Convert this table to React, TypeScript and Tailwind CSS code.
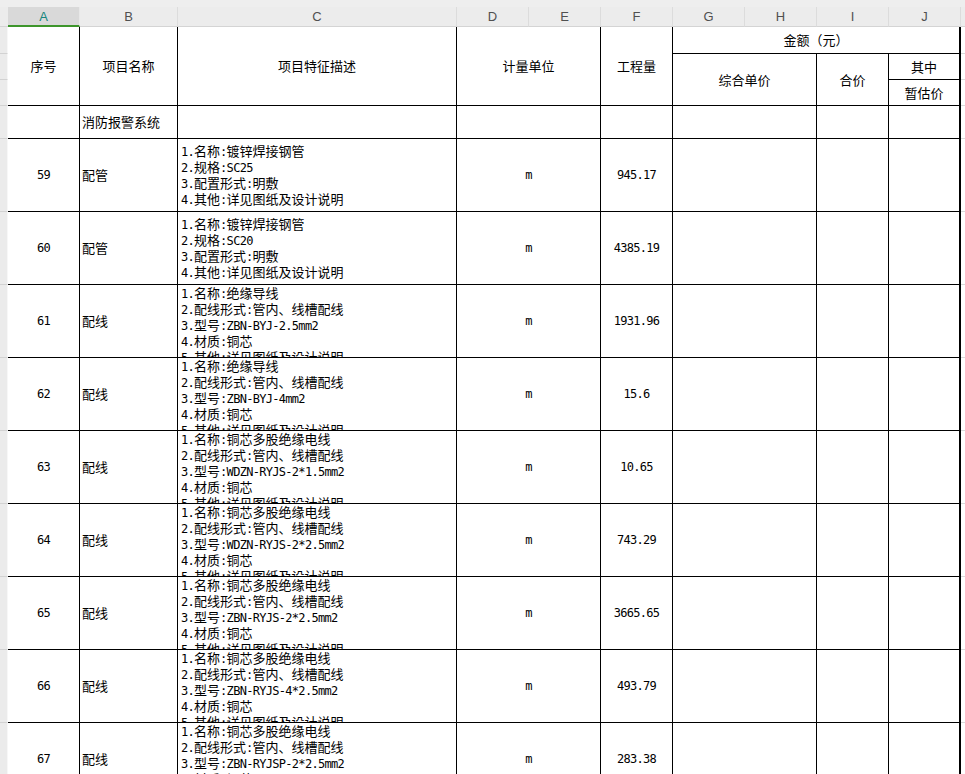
import React from "react";

const GRID =
  "grid grid-cols-[8px_72px_98px_279px_72px_72px_72px_72px_72px_72px_72px_4px]";

type Row = {
  no: string;
  name: string;
  desc: string[];
  unit: string;
  qty: string;
};

const other = "5.其他:详见图纸及设计说明";

const rows: Row[] = [
  {
    no: "59",
    name: "配管",
    desc: ["1.名称:镀锌焊接钢管", "2.规格:SC25", "3.配置形式:明敷", "4.其他:详见图纸及设计说明"],
    unit: "m",
    qty: "945.17",
  },
  {
    no: "60",
    name: "配管",
    desc: ["1.名称:镀锌焊接钢管", "2.规格:SC20", "3.配置形式:明敷", "4.其他:详见图纸及设计说明"],
    unit: "m",
    qty: "4385.19",
  },
  {
    no: "61",
    name: "配线",
    desc: ["1.名称:绝缘导线", "2.配线形式:管内、线槽配线", "3.型号:ZBN-BYJ-2.5mm2", "4.材质:铜芯", other],
    unit: "m",
    qty: "1931.96",
  },
  {
    no: "62",
    name: "配线",
    desc: ["1.名称:绝缘导线", "2.配线形式:管内、线槽配线", "3.型号:ZBN-BYJ-4mm2", "4.材质:铜芯", other],
    unit: "m",
    qty: "15.6",
  },
  {
    no: "63",
    name: "配线",
    desc: ["1.名称:铜芯多股绝缘电线", "2.配线形式:管内、线槽配线", "3.型号:WDZN-RYJS-2*1.5mm2", "4.材质:铜芯", other],
    unit: "m",
    qty: "10.65",
  },
  {
    no: "64",
    name: "配线",
    desc: ["1.名称:铜芯多股绝缘电线", "2.配线形式:管内、线槽配线", "3.型号:WDZN-RYJS-2*2.5mm2", "4.材质:铜芯", other],
    unit: "m",
    qty: "743.29",
  },
  {
    no: "65",
    name: "配线",
    desc: ["1.名称:铜芯多股绝缘电线", "2.配线形式:管内、线槽配线", "3.型号:ZBN-RYJS-2*2.5mm2", "4.材质:铜芯", other],
    unit: "m",
    qty: "3665.65",
  },
  {
    no: "66",
    name: "配线",
    desc: ["1.名称:铜芯多股绝缘电线", "2.配线形式:管内、线槽配线", "3.型号:ZBN-RYJS-4*2.5mm2", "4.材质:铜芯", other],
    unit: "m",
    qty: "493.79",
  },
  {
    no: "67",
    name: "配线",
    desc: ["1.名称:铜芯多股绝缘电线", "2.配线形式:管内、线槽配线", "3.型号:ZBN-RYJSP-2*2.5mm2", "4.材质:铜芯", other],
    unit: "m",
    qty: "283.38",
  },
];

function Mixed({ text }: { text: string }) {
  const parts = text.split(/([\x20-\x7e]+)/).filter((p) => p.length > 0);
  return (
    <>
      {parts.map((p, i) =>
        /^[\x20-\x7e]+$/.test(p) ? (
          <span
            key={i}
            className="font-['DejaVu_Sans_Mono'] text-[12px] tracking-[-0.7px]"
          >
            {p}
          </span>
        ) : (
          <span key={i}>{p}</span>
        )
      )}
    </>
  );
}

const cell = "border-r border-b border-black overflow-hidden";
const center = "flex items-center justify-center";
const strip = "bg-[#ebebeb] border-b border-r border-b-[#d2d2d2] border-r-[#f7f7f7]";
const rem = "border-b border-[#dadada] bg-white";

function Letter({ l, active }: { l: string; active?: boolean }) {
  if (active) {
    return (
      <div className="bg-[#d9d9d9] border-b-2 border-[#3d952b] border-r border-r-[#e8e8e8] flex items-center justify-center text-[#16857d] pt-[1px]">
        {l}
      </div>
    );
  }
  return (
    <div className="bg-[#ececec] border-b border-b-[#d4d4d4] border-r border-r-[#dcdcdc] flex items-center justify-center text-[#505050]">
      {l}
    </div>
  );
}

export default function App() {
  return (
    <div
      className="w-[965px] h-[774px] overflow-hidden bg-white text-black"
      style={{ fontFamily: '"Noto Sans CJK SC", "Noto Sans", sans-serif' }}
    >
      <div className="h-[7px] bg-[#eeeeee]" />
      <div
        className={`${GRID} h-[20px] text-[13px] leading-none`}
        style={{ fontFamily: '"Liberation Sans", "Noto Sans", sans-serif' }}
      >
        <div className="bg-[#ececec] border-b border-[#d4d4d4]" />
        <Letter l="A" active />
        <Letter l="B" />
        <Letter l="C" />
        <Letter l="D" />
        <Letter l="E" />
        <Letter l="F" />
        <Letter l="G" />
        <Letter l="H" />
        <Letter l="I" />
        <Letter l="J" />
        <div className="bg-[#ececec] border-b border-[#d4d4d4]" />
      </div>

      <div
        className={`${GRID} grid-rows-[27px_26px_26px_33px_repeat(9,73px)] text-[13px] leading-[16px]`}
      >
        {/* header row 1 */}
        <div className={strip} />
        <div className={`${cell} ${center} row-span-3`}>序号</div>
        <div className={`${cell} ${center} row-span-3`}>项目名称</div>
        <div className={`${cell} ${center} row-span-3`}>项目特征描述</div>
        <div className={`${cell} ${center} row-span-3 col-span-2`}>计量单位</div>
        <div className={`${cell} ${center} row-span-3`}>工程量</div>
        <div className="col-span-4 border-r-2 border-b border-black flex items-center justify-center">
          金额（元）
        </div>
        <div className={rem} />

        {/* header row 2 */}
        <div className={strip} />
        <div className={`${cell} ${center} row-span-2 col-span-2`}>综合单价</div>
        <div className={`${cell} ${center} row-span-2`}>合价</div>
        <div className={`border-r-2 border-b border-black ${center}`}>其中</div>
        <div className={rem} />

        {/* header row 3 */}
        <div className={strip} />
        <div className={`border-r-2 border-b border-black ${center}`}>暂估价</div>
        <div className={rem} />

        {/* section row */}
        <div className={strip} />
        <div className={cell} />
        <div className={`${cell} flex items-center pl-[2px]`}>消防报警系统</div>
        <div className={cell} />
        <div className={`${cell} col-span-2`} />
        <div className={cell} />
        <div className={`${cell} col-span-2`} />
        <div className={cell} />
        <div className="border-r-2 border-b border-black" />
        <div className={rem} />

        {rows.map((r) => (
          <React.Fragment key={r.no}>
            <div className={strip} />
            <div className={`${cell} ${center}`}>
              <Mixed text={r.no} />
            </div>
            <div className={`${cell} flex items-center pl-[2px]`}>{r.name}</div>
            <div
              className={`${cell} flex flex-col pl-[3px] ${
                r.desc.length > 4 ? "justify-start pt-0" : "justify-center"
              }`}
            >
              {r.desc.map((d, i) => (
                <div key={i} className="whitespace-nowrap h-[16px] shrink-0">
                  <Mixed text={d} />
                </div>
              ))}
            </div>
            <div className={`${cell} ${center} col-span-2`}>
              <Mixed text={r.unit} />
            </div>
            <div className={`${cell} ${center}`}>
              <Mixed text={r.qty} />
            </div>
            <div className={`${cell} col-span-2`} />
            <div className={cell} />
            <div className="border-r-2 border-b border-black" />
            <div className={rem} />
          </React.Fragment>
        ))}
      </div>
    </div>
  );
}
